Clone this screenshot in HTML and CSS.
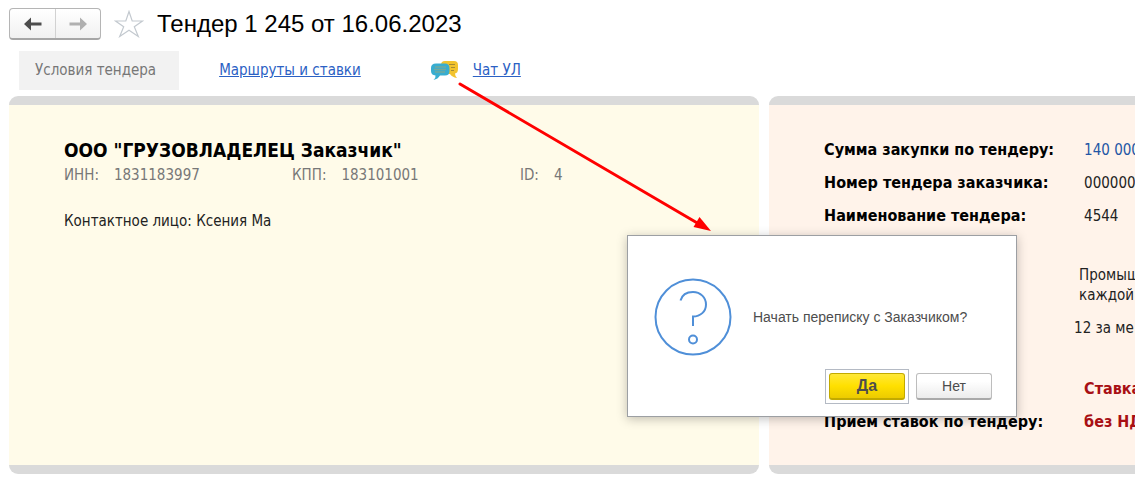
FILE: index.html
```html
<!DOCTYPE html>
<html lang="ru">
<head>
    <meta charset="UTF-8">
    <meta name="viewport" content="width=device-width, initial-scale=1.0">
    <title>Тендер 1 245 от 16.06.2023</title>
    <link rel="stylesheet" href="styles.css">
</head>
<body>
    <header class="header">
        <div class="history">
            <button type="button" class="history-btn" aria-label="Назад">
                <svg width="18" height="14" viewBox="0 0 18 14"><path d="M0 7L7 0.5V5.5H17.5V8.5H7V13.5Z" fill="#4d4d4d"/></svg>
            </button>
            <button type="button" class="history-btn" aria-label="Вперед">
                <svg width="18" height="14" viewBox="0 0 18 14"><path d="M18 7L11 0.5V5.5H0.5V8.5H11V13.5Z" fill="#b0b0b0"/></svg>
            </button>
        </div>
        <button type="button" class="star" aria-label="В избранное">
            <svg width="30" height="28" viewBox="0 0 30 28"><path d="M15 1.5L18.2 11H28.5L20.3 16.8L24.3 26.5L15 20.3L5.7 26.5L9.7 16.8L1.5 11H11.8Z" fill="#fff" stroke="#c3c9cf" stroke-width="1.2"/></svg>
        </button>
        <h1>Тендер 1 245 от 16.06.2023</h1>
    </header>

    <nav class="tabs">
        <a href="#terms" class="tab active">Условия тендера</a>
        <a href="#routes" class="tab">Маршруты и ставки</a>
        <a href="#chat" class="tab chat">
            <svg width="28" height="21" viewBox="0 0 28 21">
                <path d="M14 1H23Q27 1 27 5V9Q27 13 24 13.5Q24 16 26 18Q21 17 19 14H14Q10 14 10 10V5Q10 1 14 1Z" fill="#f2c32e"/>
                <path d="M18 4.5H24M20 7.5H24M20 10.5H23" stroke="#a58b34"/>
                <path d="M5 3.5H14Q18.5 3.5 18.5 8V11Q18.5 15.5 14 15.5H9Q7 19 2.5 20Q5 18 4.5 15.5Q0 15 0 11V8Q0 3.5 5 3.5Z" fill="#38add0"/>
                <path d="M4 7H15M3 9.5H15M4 12H14" stroke="#73a99c" stroke-width="1.5"/>
            </svg>
            <span>Чат УЛ</span>
        </a>
    </nav>

    <main class="cards">
        <section class="card customer" id="terms">
            <h2>ООО "ГРУЗОВЛАДЕЛЕЦ Заказчик"</h2>
            <div class="codes">
                <div class="code"><span>ИНН:</span><span>1831183997</span></div>
                <div class="code"><span>КПП:</span><span>183101001</span></div>
                <div class="code"><span>ID:</span><span>4</span></div>
            </div>
            <p class="contact">Контактное лицо: Ксения Ма</p>
        </section>

        <section class="card tender">
            <div class="row"><b>Сумма закупки по тендеру:</b><span class="sum">140 000</span></div>
            <div class="row"><b>Номер тендера заказчика:</b><span>000000</span></div>
            <div class="row"><b>Наименование тендера:</b><span>4544</span></div>
            <p class="note">Промыш<br>каждой</p>
            <p class="price">12 за ме</p>
            <div class="row rate"><b></b><span class="warn">Ставка</span></div>
            <div class="row"><b>Прием ставок по тендеру:</b><span class="warn">без НД</span></div>
        </section>
    </main>

    <svg class="pointer" width="256" height="154" viewBox="0 0 256 154" aria-hidden="true">
        <path d="M3 4L242 144" stroke="#f00" stroke-width="3" stroke-linecap="round"/>
        <path d="M254 151L236.5 147L242.5 137Z" fill="#f00"/>
    </svg>

    <div class="dialog" role="dialog" aria-labelledby="question">
        <div class="message">
            <svg width="78" height="78" viewBox="0 0 78 78" fill="none" stroke="#4f8fd8" stroke-width="2">
                <circle cx="39" cy="39" r="37.5"/>
                <path d="M26.5 22.5C28 17 33 14 39 14C46.5 14 52 19.5 52 26.5C52 33.5 46.5 38.5 39 38.5V48"/>
                <circle cx="39" cy="61.5" r="4"/>
            </svg>
            <p id="question">Начать переписку с Заказчиком?</p>
        </div>
        <div class="actions">
            <span class="focus"><button type="button" class="btn primary">Да</button></span>
            <button type="button" class="btn">Нет</button>
        </div>
    </div>
</body>
</html>
```

FILE: styles.css
```css
* {
    box-sizing: border-box;
}
body {
    margin: 0;
    padding: 8px 6px 5px 9px;
    background-color: #fff;
    color: #222;
    font-family: Tahoma, "DejaVu Sans Condensed", "Noto Sans", sans-serif;
    font-size: 15px;
    line-height: 20px;
}
h1, h2, p {
    margin: 0;
}
button {
    font-family: inherit;
    cursor: pointer;
}
.header {
    display: flex;
    align-items: center;
    height: 32px;
}
.history {
    display: flex;
    height: 32px;
    border: 1px solid #b5b5b5;
    border-bottom: 2px solid #a6a6a6;
    border-radius: 4px;
    background: linear-gradient(#fff, #f1f1f1);
}
.history-btn {
    display: flex;
    align-items: center;
    justify-content: center;
    width: 45px;
    padding: 0;
    border: none;
    background: none;
}
.history-btn + .history-btn {
    border-left: 1px solid #d2d2d2;
}
.star {
    display: flex;
    margin: 0 13px;
    padding: 0;
    border: none;
    background: none;
}
h1 {
    color: #000;
    font-family: Arial, "Liberation Sans", sans-serif;
    font-size: 24px;
    font-weight: normal;
    line-height: 32px;
}
.tabs {
    display: flex;
    align-items: center;
    gap: 24px;
    margin: 11px 0 6px 10px;
}
.tab {
    display: flex;
    align-items: center;
    padding: 0 16px;
    color: #2b61c4;
    line-height: 39px;
    white-space: nowrap;
}
.tab.active {
    padding: 0 23px 0 16px;
    background-color: #f2f2f2;
    color: #777;
    text-decoration: none;
}
.tab.chat {
    gap: 14px;
    padding-left: 30px;
    text-decoration: none;
}
.chat span {
    text-decoration: underline;
}
.cards {
    display: grid;
    grid-template-columns: 2.05fr 1fr;
    gap: 10px;
}
.card {
    min-width: 0;
    padding: 35px 0 33px 55px;
    border: solid #dadada;
    border-width: 9px 0;
    border-radius: 9px;
    overflow: hidden;
    white-space: nowrap;
}
.customer {
    background-color: #fffbe9;
}
.tender {
    display: flex;
    flex-direction: column;
    gap: 13px;
    border-top-right-radius: 0;
    border-bottom-right-radius: 0;
    background-color: #fff3ea;
}
h2 {
    color: #000;
    font-size: 19px;
    line-height: 20px;
}
.codes {
    display: grid;
    grid-template-columns: 228px 228px auto;
    margin-top: 5px;
    color: #777;
}
.code {
    display: flex;
    gap: 15px;
}
.contact {
    margin-top: 26px;
}
.row {
    display: flex;
}
.row b {
    flex: 0 0 260px;
    color: #000;
    font-size: 16px;
}
.sum {
    color: #2356a5;
}
.warn {
    color: #a80f14;
    font-size: 16px;
    font-weight: bold;
}
.note {
    margin-top: 26px;
    padding-left: 255px;
}
.price {
    padding-left: 250px;
}
.rate {
    min-height: 20px;
    margin-top: 28px;
}
.pointer {
    position: absolute;
    top: 80px;
    left: 457px;
}
.dialog {
    position: absolute;
    top: 235px;
    left: 627px;
    padding: 42px 24px 12px 26px;
    width: 390px;
    border: 1px solid #9c9fa3;
    background-color: #fff;
    box-shadow: 0 2px 10px rgba(0, 0, 0, 0.25);
}
.message {
    display: flex;
    align-items: center;
    gap: 21px;
    color: #4d4d4d;
    font-family: Arial, "Liberation Sans", sans-serif;
    font-size: 14px;
    white-space: nowrap;
}
.actions {
    display: flex;
    align-items: center;
    justify-content: flex-end;
    gap: 7px;
    margin-top: 13px;
}
.focus {
    display: flex;
    padding: 3px;
    border: 1px solid #b4bac4;
}
.btn {
    width: 76px;
    height: 27px;
    padding: 0;
    border: 1px solid #bdbdbd;
    border-bottom: 2px solid #a9a9a9;
    border-radius: 3px;
    background: linear-gradient(#fff 30%, #ececec);
    color: #4d4d4d;
    font-family: Arial, "Liberation Sans", sans-serif;
    font-size: 14px;
}
.btn.primary {
    border-color: #c2aa00;
    background: linear-gradient(#ffe838, #ffe000 50%, #eccb00);
    font-size: 16px;
    font-weight: bold;
}
```
